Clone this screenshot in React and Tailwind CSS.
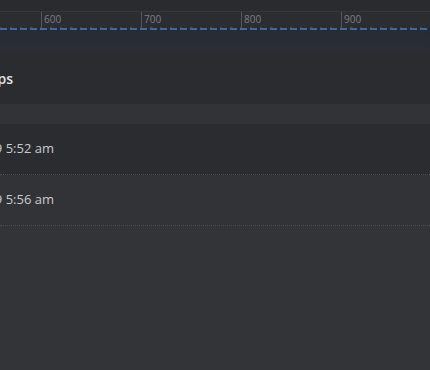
import React from "react";

const marks = [500, 600, 700, 800, 900];

function Ruler() {
  return (
    <div className="h-[16px] bg-[#2c2d31] border-t border-[#36373b] overflow-hidden">
      <div className="flex -ml-[59px] h-full">
        {marks.map((m) => (
          <div
            key={m}
            className="w-[100px] shrink-0 h-full border-l border-[#55565b] pl-[2px] pt-[2px]"
          >
            <div className="text-[10px] leading-[11px] text-[#7c7d82]">{m}</div>
          </div>
        ))}
      </div>
    </div>
  );
}

function Track() {
  return (
    <svg width="430" height="4" className="block">
      <rect x="0" y="0" width="430" height="4" fill="#262b36" />
      <line
        x1="0"
        y1="2"
        x2="430"
        y2="2"
        stroke="#3f6a9e"
        strokeWidth="2"
        strokeDasharray="7 3"
      />
      {Array.from({ length: 44 }).map((_, i) => (
        <line
          key={i}
          x1={1 + i * 10}
          y1="0"
          x2={1 + i * 10}
          y2="3"
          stroke="#56657b"
          strokeWidth="1"
        />
      ))}
    </svg>
  );
}

function Row({ label, dark }) {
  return (
    <div
      className={`h-[51px] flex items-center border-b border-dotted border-[#4b4c51] ${
        dark ? "bg-[#2b2c30]" : "bg-[#323337]"
      }`}
    >
      <div className="-ml-[146px] w-[200px] text-right text-[13px] text-[#c9cacd] whitespace-nowrap">
        {label}
      </div>
    </div>
  );
}

export default function App() {
  return (
    <div
      className="w-[430px] h-[370px] overflow-hidden flex flex-col bg-[#333438]"
      style={{ fontFamily: '"Open Sans", "Liberation Sans", sans-serif' }}
    >
      <div className="h-[11px] bg-[#2a2b2f]" />
      <Ruler />
      <Track />
      <div className="h-[22px] bg-gradient-to-b from-[#262b37] to-[#2a2d34]" />
      <div className="h-[51px] flex items-center bg-[#2b2c30]">
        <div className="-ml-[100px] w-[113px] text-right text-[14px] font-semibold text-[#e2e3e5] whitespace-nowrap">
          Timestamps
        </div>
      </div>
      <div className="h-[20px] bg-[#323337]" />
      <Row label="12 Mar 2019 5:52 am" dark />
      <Row label="12 Mar 2019 5:56 am" />
      <div className="flex-1 bg-[#333438]" />
    </div>
  );
}
